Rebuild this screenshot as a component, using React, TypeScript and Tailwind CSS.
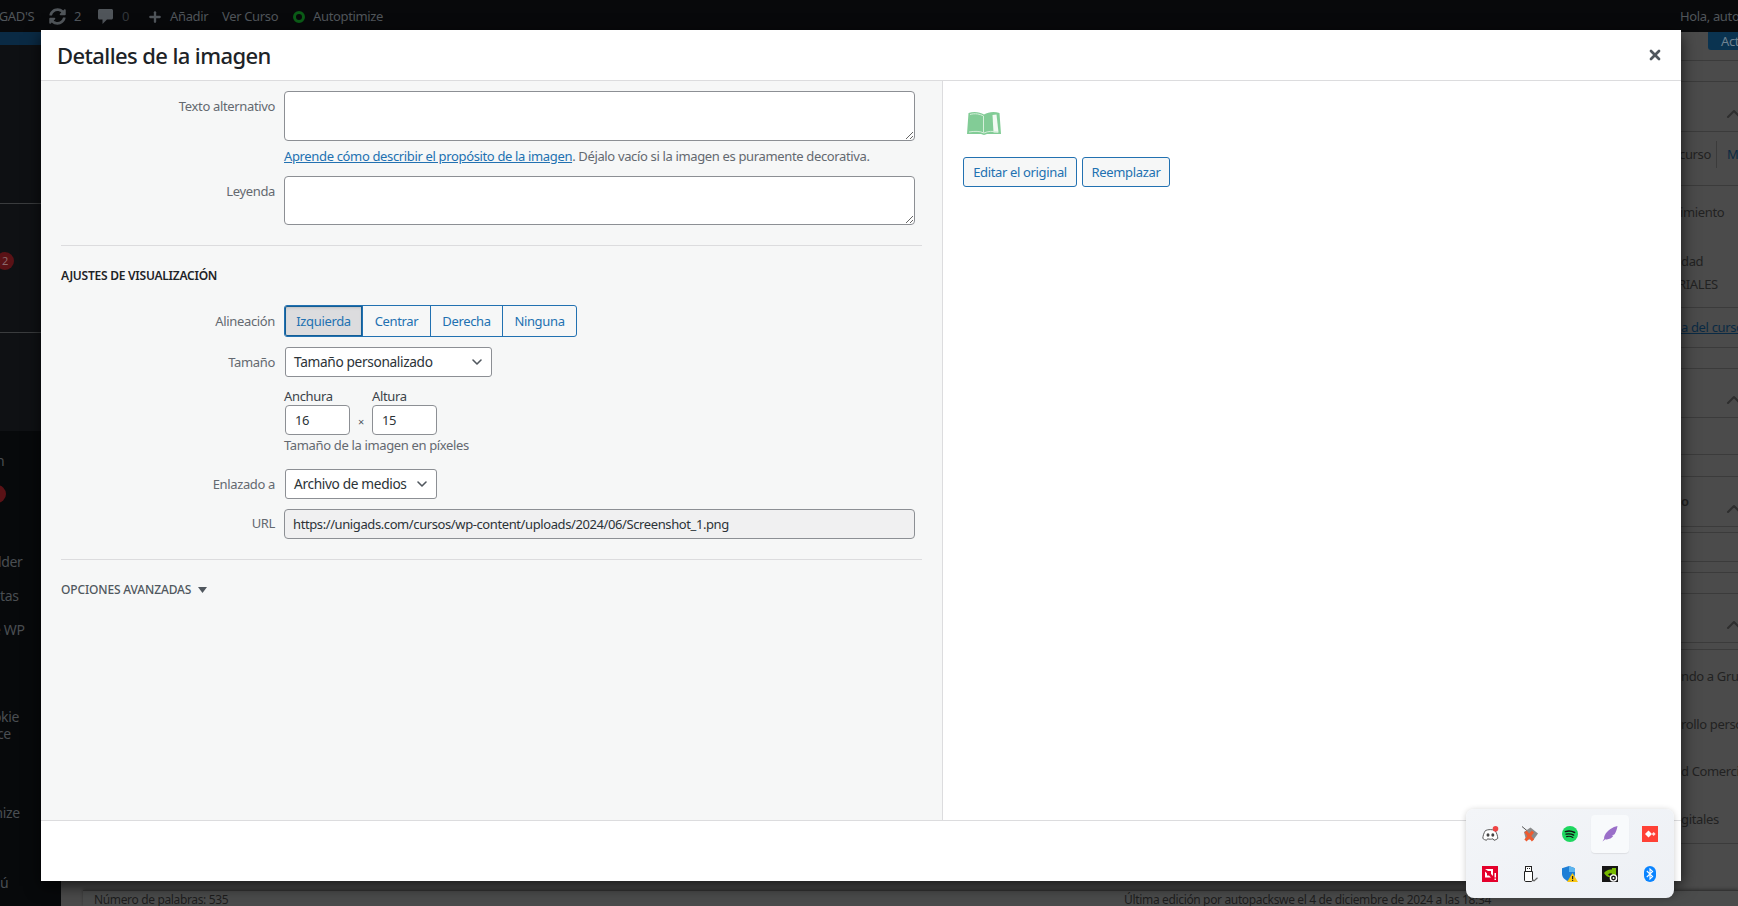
import { ChevronDown, ChevronUp, Plus, X } from "lucide-react"
import { FaSyncAlt } from "react-icons/fa"
import type { ReactNode } from "react"

const sidebarRows = [
  { h: "h-[13px]" },
  { h: "h-[32px]", text: "n", ml: "-ml-[4px]" },
  { h: "h-[35px]", badge: true },
  { h: "h-[33px]" },
  { h: "h-[34px]", text: "lder", ml: "-ml-[2px]" },
  { h: "h-[34px]", text: "tas", ml: "ml-0" },
  { h: "h-[34px]", text: "e WP", ml: "-ml-[7px]" },
  { h: "h-[61px]" },
  { h: "h-[18px]", text: "okie", ml: "-ml-[7px]" },
  { h: "h-[17px]", text: "ce", ml: "-ml-[3px]" },
  { h: "h-[60px]" },
  { h: "h-[20px]", text: "mize", ml: "-ml-[10px]" },
  { h: "h-[50px]" },
  { h: "h-[20px]", text: "ú", ml: "ml-0" },
]

// what peeks out at the right of the modal, top to bottom
const strip = [
  { h: "h-[11px]", line: true },
  { h: "h-[21px]", line: true },
  { h: "h-[50px]", line: true, chevron: true },
  { h: "h-[54px]", line: true, tabs: true },
  { h: "h-[54px]", text: "imiento", ml: "-ml-[1px]" },
  { h: "h-[10px]" },
  { h: "h-[24px]", text: "dad", ml: "ml-0" },
  { h: "h-[22px]", text: "RIALES", ml: "-ml-[3px]" },
  { h: "h-[12px]", line: true },
  { h: "h-[40px]", text: "a del curso", ml: "ml-0", link: true, line: true },
  { h: "h-[21px]", line: true },
  { h: "h-[49px]", line: true, chevron: true },
  { h: "h-[37px]", line: true },
  { h: "h-[22px]", line: true },
  { h: "h-[50px]", text: "o", ml: "ml-0", bold: true, chevron: true, line: true },
  { h: "h-[6px]", line: true },
  { h: "h-[29px]", line: true },
  { h: "h-[11px]", line: true },
  { h: "h-[21px]", line: true },
  { h: "h-[49px]", line: true, chevron: true },
  { h: "h-[7px]", line: true },
  { h: "h-[54px]", text: "ndo a Grupos", ml: "ml-0" },
  { h: "h-[42px]", text: "rollo personal", ml: "ml-0" },
  { h: "h-[52px]", text: "d Comercial", ml: "ml-0" },
  { h: "h-[44px]", text: "gitales", ml: "ml-0" },
  { h: "h-[2px]", line: true },
]

function Label({ children, className = "" }: { children: ReactNode; className?: string }) {
  return <span className={`w-[214px] shrink-0 text-right text-[#646970] ${className}`}>{children}</span>
}

function Select({ text, width }: { text: string; width: string }) {
  return (
    <button className={`${width} flex h-[30px] items-center justify-between rounded-[3px] border border-[#8c8f94] bg-white pl-[8px] pr-[6px] text-[13.7px] text-[#2c3338]`}>
      {text}
      <ChevronDown size={16} strokeWidth={2.4} className="text-[#50575e]" />
    </button>
  )
}

function Trayicons() {
  return (
    <div className="grid grid-cols-[repeat(5,40px)] grid-rows-[repeat(2,40px)]">
      <div className="flex items-center justify-center">
        <svg width="17" height="16" viewBox="0 0 17 16">
          <path d="M3.5 4.5C6 3.3 10.5 3.3 13 4.5C14.6 6.8 15.6 9.6 15.8 12.4C14.6 13.5 13.3 14 12 14.3L11 12.8C8.8 13.3 7.6 13.3 5.5 12.8L4.5 14.3C3.2 14 1.9 13.5 .8 12.4C1 9.6 1.9 6.8 3.5 4.5Z" fill="#fff" stroke="#5c5c5c" strokeWidth="1" />
          <ellipse cx="6" cy="9" rx="1.5" ry="1.7" fill="#444" />
          <ellipse cx="10.8" cy="9" rx="1.5" ry="1.7" fill="#444" />
          <circle cx="13.5" cy="2.8" r="2.8" fill="#ef4444" />
        </svg>
      </div>
      <div className="flex items-center justify-center">
        <svg width="16" height="16" viewBox="0 0 16 16">
          <path d="M0 0.5L6 5.5" stroke="#555" strokeWidth="1" />
          <path d="M2 6L8.5 1.5L16 7.5L12 13L4 14Z" fill="#8b8b8b" />
          <path d="M3.5 5.5L11 14.5M11 5.5L3.5 14.5" stroke="#ee5a30" strokeWidth="3" />
        </svg>
      </div>
      <div className="flex items-center justify-center">
        <svg width="16" height="16" viewBox="0 0 16 16">
          <circle cx="8" cy="8" r="8" fill="#1ed760" />
          <path d="M3.4 5.6C6.2 4.8 9.8 5 12.6 6.5" stroke="#111" strokeWidth="1.5" fill="none" strokeLinecap="round" />
          <path d="M4 8.2C6.4 7.6 9.4 7.8 11.7 9.1" stroke="#111" strokeWidth="1.3" fill="none" strokeLinecap="round" />
          <path d="M4.6 10.6C6.6 10.1 9 10.3 10.9 11.4" stroke="#111" strokeWidth="1.1" fill="none" strokeLinecap="round" />
        </svg>
      </div>
      <div className="flex items-center justify-center">
        <div className="flex h-[38px] w-[38px] items-center justify-center rounded-[4px] bg-[#f8fafc] shadow-[0_1px_1px_rgba(0,0,0,0.08)]">
          <svg width="16" height="16" viewBox="0 0 16 16">
            <path d="M15.5 0C11 .8 5.5 4 2.8 9.2C2.2 10.6 2 11.6 2.2 12.4L.5 15.5L3.2 13.2C6 14 9.5 12.5 11.5 9.8L9.6 9.8L12.6 8.2C14.2 5.6 15 3 15.5 0Z" fill="#9a6fc9" />
          </svg>
        </div>
      </div>
      <div className="flex items-center justify-center">
        <svg width="16" height="16" viewBox="0 0 16 16">
          <rect width="16" height="16" fill="#ff4136" />
          <path d="M6.5 4.5L10 8L6.5 11.5L3 8Z" fill="#fff" />
          <path d="M11.6 6L13.6 8L11.6 10L9.8 8Z" fill="#ffe3e0" />
        </svg>
      </div>
      <div className="flex items-center justify-center">
        <svg width="16" height="16" viewBox="0 0 16 16">
          <rect width="16" height="16" fill="#e4002b" />
          <path d="M3 3H11V10L9 8V5H6Z" fill="#fff" />
          <path d="M3 5.5L5 7.5V9.5H7L9 11.5H3Z" fill="#fff" />
          <rect x="12.5" y="7" width="1.5" height="4.5" fill="#fff" />
          <rect x="12.5" y="12.5" width="1.5" height="1.5" fill="#fff" />
        </svg>
      </div>
      <div className="flex items-center justify-center">
        <svg width="16" height="16" viewBox="0 0 16 16">
          <rect x="3.5" y=".5" width="6" height="5" fill="#fff" stroke="#222" />
          <rect x="5" y="2" width="1" height="1" fill="#222" />
          <rect x="7" y="2" width="1" height="1" fill="#222" />
          <path d="M2.5 5.5H10.5V14C10.5 15 10 15.5 9 15.5H4C3 15.5 2.5 15 2.5 14Z" fill="#fff" stroke="#222" />
          <path d="M10.5 13.5L12 15L15.5 11.8" stroke="#666" strokeWidth="1.2" fill="none" />
        </svg>
      </div>
      <div className="flex items-center justify-center">
        <svg width="16" height="16" viewBox="0 0 16 16">
          <path d="M7 0L13 2.2V8C13 11.5 10 14.5 7 15.5C3.5 14.5 0 11.5 0 8V2.2Z" fill="#1f7fd6" />
          <path d="M7 0L13 2.2V6H7Z" fill="#5cb4ee" />
          <path d="M10.5 7L16 16H5Z" fill="#f8c513" />
          <rect x="10" y="10" width="1.2" height="3" fill="#222" />
          <rect x="10" y="13.8" width="1.2" height="1.2" fill="#222" />
        </svg>
      </div>
      <div className="flex items-center justify-center">
        <svg width="16" height="16" viewBox="0 0 16 16">
          <rect width="16" height="16" fill="#151515" />
          <path d="M2 7C4 4.2 7 3 10 3.5V2H14V9H10V7.5C8.5 7 7 7.5 6 8.5C7 9.8 8.5 10 10 10V11C7 12 4 10.5 2 7Z" fill="#76b900" />
          <circle cx="11.5" cy="12" r="3.8" fill="#fff" />
          <circle cx="11.5" cy="12" r="2.4" fill="#151515" />
          <circle cx="11.5" cy="12" r="1" fill="#fff" />
        </svg>
      </div>
      <div className="flex items-center justify-center">
        <svg width="12" height="16" viewBox="0 0 12 16">
          <rect width="12" height="16" rx="6" fill="#0a84ff" />
          <path d="M2.8 5L8.6 10.6L6 13V3L8.6 5.4L2.8 11" stroke="#fff" strokeWidth="1.1" fill="none" />
        </svg>
      </div>
    </div>
  )
}

export default function App() {
  return (
    <div className="relative flex h-[906px] w-full flex-col overflow-hidden bg-[#4b4b4b] font-['Noto_Sans','Liberation_Sans',sans-serif] text-[13px] tracking-[-0.35px]">
      {/* admin bar */}
      <div className="flex h-[32px] shrink-0 items-center overflow-hidden whitespace-nowrap bg-[#08090b] pt-[1px] text-[13px] text-[#50555a]">
        <span className="-ml-[24px] w-[73px] shrink-0">UNIGAD'S</span>
        <FaSyncAlt size={17} className="shrink-0" />
        <span className="ml-[8px] w-[24px] shrink-0">2</span>
        <svg width="15" height="17" viewBox="0 0 15 17" className="shrink-0 fill-[#50555a]">
          <path d="M1.5 1H13.5C14.3 1 15 1.7 15 2.5V10C15 10.8 14.3 11.5 13.5 11.5H9L4.5 16V11.5H1.5C.7 11.5 0 10.8 0 10V2.5C0 1.7 .7 1 1.5 1Z" />
        </svg>
        <span className="ml-[9px] w-[25px] shrink-0 text-[#33373b]">0</span>
        <Plus size={16} strokeWidth={3.5} className="shrink-0" />
        <span className="ml-[7px] w-[52px] shrink-0">Añadir</span>
        <span className="w-[71px] shrink-0">Ver Curso</span>
        <span className="h-[12px] w-[12px] shrink-0 rounded-full border-[3px] border-[#0b5c17]" />
        <span className="ml-[8px]">Autoptimize</span>
        <span className="ml-auto w-[58px] overflow-hidden">Hola, autopackswe</span>
      </div>

      <div className="flex min-h-0 flex-1">
        {/* sidebar */}
        <div className="flex w-[61px] shrink-0 flex-col overflow-hidden bg-[#07090b] text-[14px] text-[#4a4e52]">
          <div className="h-[13px] shrink-0 bg-[#0a2a44]" />
          <div className="h-[159px] shrink-0 border-b border-[#3a3c3e] bg-[#0e1013]" />
          <div className="flex h-[129px] shrink-0 items-center border-b border-[#3a3c3e] bg-[#0f1114] pb-[14px]">
            <span className="-ml-[4px] flex h-[18px] w-[18px] items-center justify-center rounded-full bg-[#5a1216] text-[11px] text-[#8a6a6c]">2</span>
          </div>
          <div className="h-[98px] shrink-0 bg-[#0f1114]" />
          {sidebarRows.map((row, i) => (
            <div key={i} className={`${row.h} flex shrink-0 items-center whitespace-nowrap`}>
              {row.badge && <span className="-ml-[12px] h-[18px] w-[18px] rounded-full bg-[#5a1216]" />}
              {row.text && <span className={row.ml}>{row.text}</span>}
            </div>
          ))}
        </div>

        {/* main content, mostly hidden by the modal */}
        <div className="flex min-w-0 flex-1 flex-col">
          <div className="flex min-h-0 flex-1 justify-end">
            <div className="flex w-[57px] flex-col overflow-hidden text-[13px] text-[#222]">
              <div className="flex h-[18px] shrink-0 justify-end">
                <span className="h-[18px] w-[30px] overflow-hidden rounded-bl-[3px] bg-[#0a3350] pl-[13px] text-[13px] text-[#6f8291]">Actualizar</span>
              </div>
              {strip.map((row, i) => (
                <div key={i} className={`${row.h} relative flex shrink-0 items-center whitespace-nowrap ${row.line ? "border-b border-[#3b3b3b]" : ""}`}>
                  {row.tabs && (
                    <>
                      <span className="mt-[9px] flex h-[27px] w-[36px] items-center justify-end self-start border-r border-[#3b3b3b] pr-[5px]">curso</span>
                      <span className="ml-[10px] mt-[9px] flex h-[27px] items-center self-start text-[#0b2a42]">M</span>
                    </>
                  )}
                  {row.text && (
                    <span className={`${row.ml} ${row.link ? "text-[#0a2a44] underline" : ""} ${row.bold ? "font-semibold" : ""}`}>{row.text}</span>
                  )}
                  {row.chevron && <ChevronUp size={24} strokeWidth={2} className="absolute left-[41px] top-[calc(50%-5px)] text-[#2e2e2e]" />}
                </div>
              ))}
            </div>
          </div>
          <div className="ml-[22px] flex h-[16px] shrink-0 justify-between border-t border-[#333] bg-[#4b4c4c] pl-[11px] pr-[247px] pt-[2px] text-[12px] leading-[14px] text-[#1d1d1d] shadow-[0_-1px_3px_rgba(0,0,0,0.3)]">
            <span>Número de palabras: 535</span>
            <span>Última edición por autopackswe el 4 de diciembre de 2024 a las 18:34</span>
          </div>
        </div>
      </div>

      {/* media modal */}
      <div className="absolute left-[41px] top-[30px] flex h-[851px] w-[1640px] flex-col bg-white shadow-[0_5px_15px_rgba(0,0,0,0.7)]">
        <div className="flex h-[51px] shrink-0 items-center justify-between border-b border-[#dcdcde] pl-[16px] pr-[18px]">
          <h1 className="text-[22px] font-medium tracking-[-0.6px] text-[#1d2327]">Detalles de la imagen</h1>
          <X size={16} strokeWidth={4} className="text-[#50575e]" />
        </div>

        <div className="flex min-h-0 flex-1 border-b border-[#dcdcde]">
          <div className="w-[902px] shrink-0 border-r border-[#dcdcde] bg-[#f6f7f7] pl-[20px] pr-[20px] pt-[10px]">
            <div className="flex gap-[9px]">
              <Label className="pt-[6px]">Texto alternativo</Label>
              <div className="flex-1">
                <textarea className="block h-[50px] w-[631px] rounded-[4px] border border-[#8c8f94] bg-white" />
                <p className="mt-[6px] leading-[18px] text-[#646970]">
                  <a className="text-[#2271b1] underline">Aprende cómo describir el propósito de la imagen</a>. Déjalo vacío si la imagen es puramente decorativa.
                </p>
              </div>
            </div>
            <div className="mt-[11px] flex gap-[9px]">
              <Label className="pt-[6px]">Leyenda</Label>
              <textarea className="block h-[49px] w-[631px] rounded-[4px] border border-[#8c8f94] bg-white" />
            </div>
            <div className="mt-[20px] border-t border-[#dcdcde]" />
            <h2 className="mt-[21px] text-[12px] font-semibold uppercase leading-[18px] tracking-[-0.25px] text-[#1d2327]">Ajustes de visualización</h2>

            <div className="mt-[20px] flex items-center gap-[9px]">
              <Label className="pt-[1px] text-[#3c434a]">Alineación</Label>
              <div className="flex h-[32px] rounded-[3px] border border-[#2271b1] text-[#2271b1]">
                <button className="w-[77px] rounded-l-[2px] bg-[#dcdcde] pt-[1px] shadow-[inset_0_0_0_1px_#135e96,inset_0_2px_5px_-3px_rgba(0,0,0,0.5)]">Izquierda</button>
                <button className="w-[68px] border-l border-[#2271b1] pt-[1px]">Centrar</button>
                <button className="w-[72px] border-l border-[#2271b1] pt-[1px]">Derecha</button>
                <button className="w-[74px] border-l border-[#2271b1] pt-[1px]">Ninguna</button>
              </div>
            </div>
            <div className="mt-[10px] flex items-center gap-[10px]">
              <Label className="pt-[1px]">Tamaño</Label>
              <Select text="Tamaño personalizado" width="w-[207px]" />
            </div>
            <div className="ml-[223px] mt-[11px] flex items-end">
              <div className="w-[88px]">
                <div className="leading-[17px] text-[#3c434a]">Anchura</div>
                <input readOnly value="16" className="ml-[1px] block h-[30px] w-[65px] rounded-[4px] border border-[#8c8f94] bg-white pl-[9px] text-[#2c3338]" />
              </div>
              <div className="relative">
                <span className="absolute -left-[14px] bottom-[5px] text-[11px] text-[#50575e]">×</span>
                <div className="leading-[17px] text-[#3c434a]">Altura</div>
                <input readOnly value="15" className="block h-[30px] w-[65px] rounded-[4px] border border-[#8c8f94] bg-white pl-[9px] text-[#2c3338]" />
              </div>
            </div>
            <p className="ml-[223px] mt-[1px] leading-[18px] text-[#646970]">Tamaño de la imagen en píxeles</p>
            <div className="mt-[15px] flex items-center gap-[10px]">
              <Label className="pt-[2px]">Enlazado a</Label>
              <Select text="Archivo de medios" width="w-[152px]" />
            </div>
            <div className="mt-[10px] flex items-center gap-[9px]">
              <Label>URL</Label>
              <input
                readOnly
                value="https://unigads.com/cursos/wp-content/uploads/2024/06/Screenshot_1.png"
                className="h-[30px] w-[631px] rounded-[4px] border border-[#8c8f94] bg-[#f0f0f1] pl-[8px] tracking-[-0.4px] text-[#2c3338]"
              />
            </div>
            <div className="mt-[20px] border-t border-[#dcdcde]" />
            <div className="mt-[21px] flex items-center gap-[6px] text-[12px] font-medium uppercase leading-[18px] tracking-[-0.15px] text-[#50575e]">
              Opciones avanzadas
              <svg width="9" height="6" viewBox="0 0 9 6" className="ml-[1px]">
                <path d="M0 0H9L4.5 6Z" fill="#50575e" />
              </svg>
            </div>
          </div>

          <div className="flex-1 pl-[20px] pt-[30px]">
            <svg width="34" height="24" viewBox="0 0 34 24" className="ml-[4px] block">
              <path d="M1.5 2C7 0 13 1 17 3.5C21 1 27 0 32.5 2L34 23H20L17 24L14 23H0Z" fill="#82cc96" />
              <path d="M25.5 4L29.5 3.5L31.5 21.5L26.5 21.5Z" fill="#f2faf3" />
              <path d="M3 3.5C8 2 13 3 16.5 5M16.5 5V21.5M2 21C7.5 20 13 20 17 22C21 20 26 20 31 21" stroke="#d5efda" strokeWidth="1" fill="none" />
            </svg>
            <div className="mt-[22px] flex gap-[5px] text-[#2271b1]">
              <button className="h-[30px] w-[114px] rounded-[3px] border border-[#2271b1] bg-[#f6f7f7] pt-[1px]">Editar el original</button>
              <button className="h-[30px] w-[88px] rounded-[3px] border border-[#2271b1] bg-[#f6f7f7] pt-[1px]">Reemplazar</button>
            </div>
          </div>
        </div>

        <div className="h-[60px] shrink-0 bg-white" />
      </div>

      {/* windows tray popup */}
      <div className="absolute left-[1466px] top-[809px] h-[89px] w-[208px] rounded-[8px] bg-gradient-to-br from-[#f3f5f8] to-[#edf0f5] pl-[4px] pr-[4px] pt-[5px] shadow-[0_1px_6px_rgba(0,0,0,0.2)]">
        <Trayicons />
      </div>
    </div>
  )
}
